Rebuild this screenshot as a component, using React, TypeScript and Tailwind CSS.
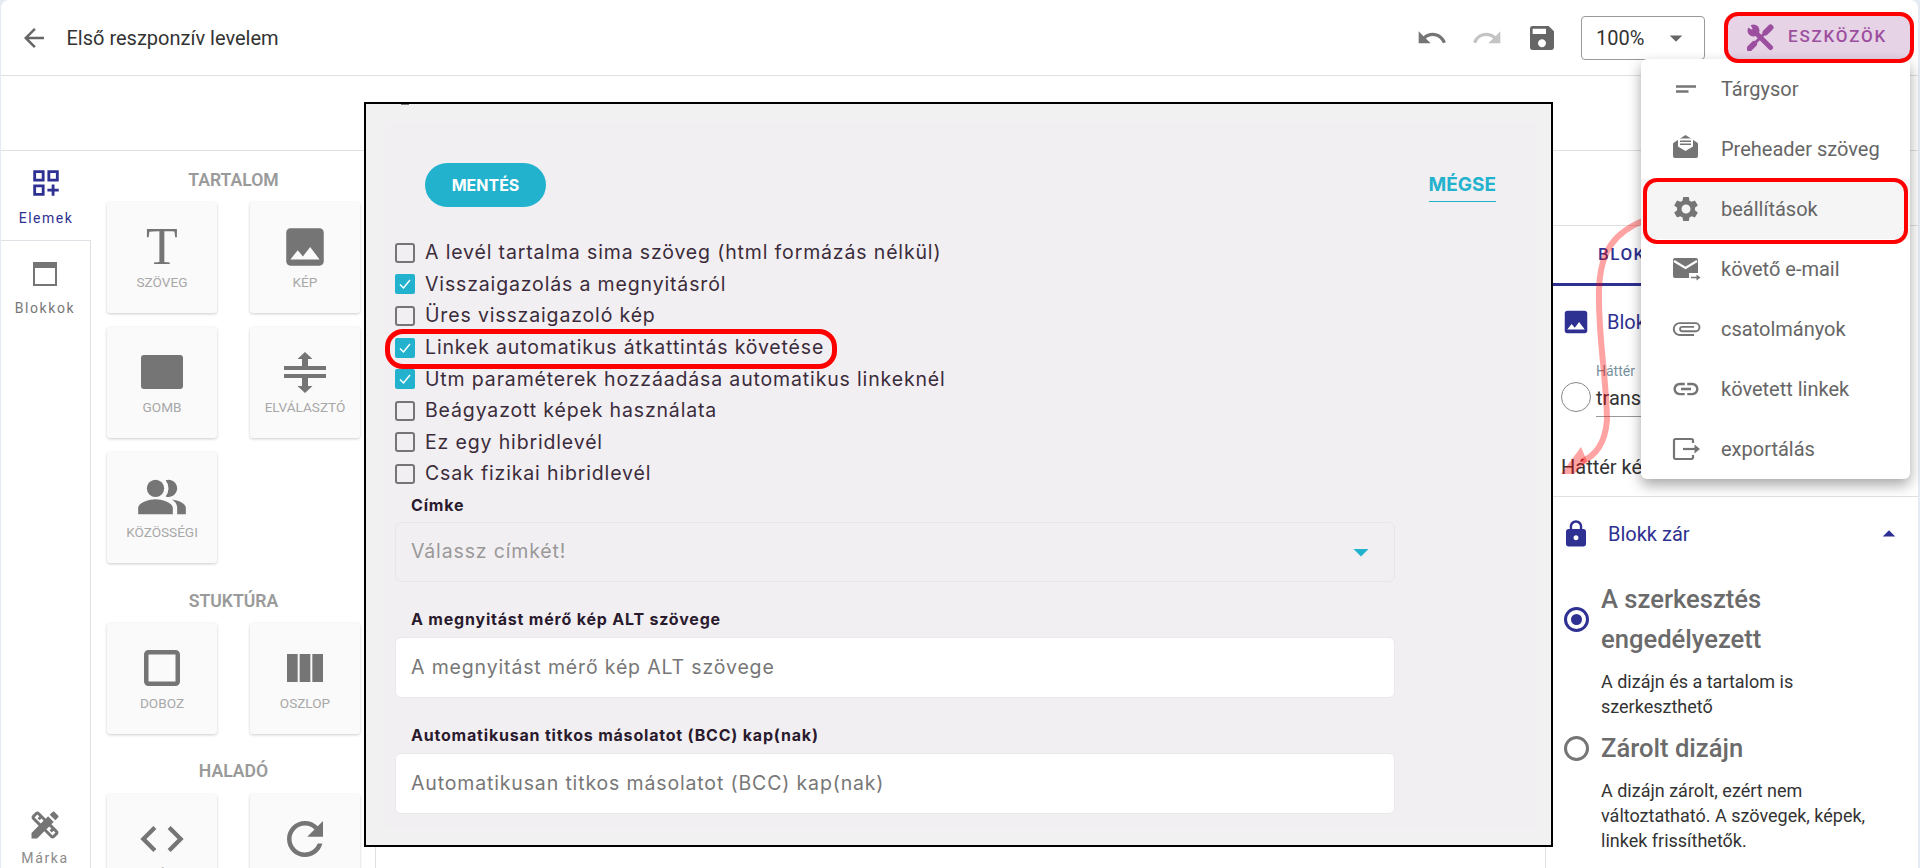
import React from "react";
import {
  MdArrowBack, MdUndo, MdRedo, MdSave, MdArrowDropDown, MdArrowDropUp, MdShortText, MdSettings,
  MdOutlineAttachment, MdLink, MdOutlineDashboardCustomize, MdDesignServices, MdImage,
  MdPeopleAlt, MdCropSquare, MdViewColumn, MdCode, MdRefresh, MdLock,
} from "react-icons/md";

const navy = "text-[#2e3191]";

function ToolsIcon() {
  return (
    <svg width="27" height="27" viewBox="0 0 27 27" fill="none" stroke="currentColor" className="shrink-0">
      <circle cx="6.500" cy="6.500" r="6" fill="currentColor" stroke="none" />
      <path d="M6.500 6.500 0 3V0h3z" fill="#e6d3e6" stroke="none" />
      <path d="M7 7 23.500 23.500" strokeWidth="5" strokeLinecap="round" />
      <path d="M23.500 3.500 18.500 8.500" strokeWidth="6" strokeLinecap="round" />
      <path d="M18.500 8.500 6 21" strokeWidth="3" />
      <path d="M7 20 2.500 24.500" strokeWidth="6" strokeLinecap="round" />
    </svg>
  );
}

function SeparatorIcon() {
  return (
    <svg width="42" height="41" viewBox="0 0 42 41" fill="#757575">
      <path d="M21 0 28.500 7H24v7h-6V7h-4.500zM0 14h42v4H0zM0 22h42v4H0zM18 26h6v8h4.500L21 41l-7.500-7H18z" />
    </svg>
  );
}

function PreheaderIcon() {
  return (
    <svg width="30" height="30" viewBox="0 0 30 30">
      <path fill="#757575" d="M14.500 1 3 8.500A2 2 0 0 0 2 10.500V22a2 2 0 0 0 2 2h21a2 2 0 0 0 2-2V10.500a2 2 0 0 0-1-2z" />
      <path fill="#fff" d="M7 4.500h15v8L14.500 17 7 12.500z" />
      <path fill="#757575" d="M9 6.500h11V8H9zM9 9.500h11V11H9z" />
    </svg>
  );
}

function FollowIcon() {
  return (
    <svg width="30" height="30" viewBox="0 0 30 30">
      <path fill="#757575" d="M4 4h21a2 2 0 0 1 2 2v13h-9v5H4a2 2 0 0 1-2-2V6a2 2 0 0 1 2-2z" />
      <path fill="none" stroke="#fff" strokeWidth="2.200" d="M3 7l11.500 7L26 7" />
      <path fill="#757575" d="M20 22.800h5.500V20.500l4 3-4 3v-2.200H20z" />
    </svg>
  );
}

function ExportIcon() {
  return (
    <svg width="30" height="30" viewBox="0 0 30 30" fill="none" stroke="#757575" strokeWidth="2.200">
      <path d="M22 9V6.500A1.500 1.500 0 0 0 20.500 5H4.500A1.500 1.500 0 0 0 3 6.500v17A1.500 1.500 0 0 0 4.500 25h16a1.500 1.500 0 0 0 1.500-1.500V21" />
      <path d="M12 15h13" />
      <path d="M23.500 10.500 29 15l-5.500 4.500z" fill="#757575" stroke="none" />
    </svg>
  );
}

function BlockIcon() {
  return (
    <svg width="24" height="24" viewBox="0 0 24 24">
      <rect x="1" y="1" width="22" height="22" fill="#fff" stroke="#757575" strokeWidth="2" />
      <rect x="1" y="1" width="22" height="5" fill="#757575" />
    </svg>
  );
}

function Card({ label, children }: { label: string; children: React.ReactNode }) {
  return (
    <div className="h-[111px] w-[110px] rounded-[3px] bg-[#fafafa] shadow-[0_1px_3px_rgba(0,0,0,0.2)] pt-5 flex flex-col items-center">
      <div className="h-[50px] flex items-center justify-center text-[#757575]">{children}</div>
      <div className="h-5 flex items-center text-[13.6px] text-[#a8a8a8] uppercase whitespace-nowrap">{label}</div>
    </div>
  );
}

function Heading({ children, className = "" }: { children: React.ReactNode; className?: string }) {
  return <div className={`h-[22px] flex items-center justify-center text-[17.6px] font-semibold text-[#9a9a9a] ${className}`}>{children}</div>;
}

function Check({ checked, label }: { checked?: boolean; label: string }) {
  return (
    <div className="h-[31.6px] flex items-center">
      {checked ? (
        <div className="w-5 h-5 rounded-[2px] bg-[#23b2ce] flex items-center justify-center">
          <svg width="14" height="14" viewBox="0 0 14 14" fill="none" stroke="#fff" strokeWidth="1.500"><path d="m2 7.500 3.500 3.500L12 3" /></svg>
        </div>
      ) : (
        <div className="w-5 h-5 rounded-[3px] border-2 border-[#757575]" />
      )}
      <span className="ml-2.5 font-['Inter',sans-serif] text-[19.5px] tracking-[0.85px] text-[#3b2c3b] whitespace-nowrap">{label}</span>
    </div>
  );
}

function Field({ label, placeholder }: { label: string; placeholder: string }) {
  return (
    <div className="mt-[27px]">
      <div className="pl-4 h-[21px] flex items-center font-['Inter',sans-serif] text-[16px] tracking-[0.8px] font-bold text-[#2a1a2e]">{label}</div>
      <div className="mt-[7px] h-[61px] w-[1000px] rounded-md bg-white border border-[#ebe8eb] pl-[15px] flex items-center font-['Inter',sans-serif] text-[19.5px] tracking-[0.85px] text-[#777]">{placeholder}</div>
    </div>
  );
}

const menuItems: [React.ReactNode, string, boolean?][] = [
  [<MdShortText size={30} color="#757575" />, "Tárgysor"],
  [<PreheaderIcon />, "Preheader szöveg"],
  [<MdSettings size={30} color="#757575" />, "beállítások", true],
  [<FollowIcon />, "követő e-mail"],
  [<MdOutlineAttachment size={30} color="#757575" />, "csatolmányok"],
  [<MdLink size={30} color="#757575" />, "követett linkek"],
  [<ExportIcon />, "exportálás"],
];

export default function App() {
  return (
    <div className="relative w-[1920px] h-[868px] overflow-hidden bg-[#e4ebf2] font-['Roboto',sans-serif] pl-px pr-0.5">
      <div className="h-full bg-white rounded-t-lg flex flex-col">
        {/* Header */}
        <header className="h-[76px] shrink-0 border-b border-[#e0e0e0] flex items-center pl-[18px] pr-2">
          <MdArrowBack size={30} color="#666" />
          <span className="ml-[17.5px] text-[20px] text-[#333]">Első reszponzív levelem</span>
          <div className="ml-auto flex items-center gap-[23px]">
            <MdUndo size={32} color="#757575" />
            <MdRedo size={32} color="#c4c4c4" />
            <MdSave size={32} color="#666" />
          </div>
          <div className="ml-[23px] w-[124px] h-[44px] rounded border border-[#999] pl-[14px] flex items-center text-[20px] text-[#333]">
            100%
            <MdArrowDropDown size={30} color="#666" className="ml-[17px]" />
          </div>
          <div className="ml-[21px] w-[184px] h-[45px] rounded-[10px] bg-[#e6d3e6] border-b border-[#9c4f9f] flex items-center pl-[21px] text-[#9c4f9f]">
            <ToolsIcon />
            <span className="ml-[14px] text-[17px] font-medium tracking-[1.800px]">ESZKÖZÖK</span>
          </div>
        </header>
        <div className="h-[75px] shrink-0 border-b border-[#e0e0e0]" />

        {/* Main */}
        <div className="flex-1 min-h-0 flex overflow-hidden">
          {/* Tabs */}
          <aside className="w-[90px] shrink-0 flex flex-col">
            <div className="h-[90px] border-b border-[#dfe3e8] flex flex-col items-center pt-[15px]">
              <MdOutlineDashboardCustomize size={34} className={navy} />
              <span className={`mt-[8px] text-[14px] leading-5 tracking-[1.500px] ${navy}`}>Elemek</span>
            </div>
            <div className="flex-1 border-r border-[#e0e0e0] flex flex-col items-center pt-[21px] pr-px">
              <BlockIcon />
              <span className="mt-[12px] text-[14px] leading-5 tracking-[1.600px] text-[#777]">Blokkok</span>
              <div className="mt-auto flex flex-col items-center text-[#8a8a8a]">
                <MdDesignServices size={36} color="#757575" />
                <span className="mt-[5px] text-[14px] leading-5 tracking-[1.600px]">Márka</span>
              </div>
            </div>
          </aside>

          {/* Element panel */}
          <section className="w-[285px] shrink-0 border-r border-[#e0e0e0] pl-4 pt-[18px]">
            <div className="w-[253px]">
              <Heading className="mb-[11px]">TARTALOM</Heading>
              <div className="grid grid-cols-[110px_110px] gap-x-[33px] gap-y-[14px]">
                <Card label="Szöveg"><span className="font-['Liberation_Serif',serif] text-[52px] leading-none">T</span></Card>
                <Card label="Kép"><MdImage size={50} /></Card>
                <Card label="Gomb"><div className="w-[42px] h-[34px] rounded-[3px] bg-[#757575]" /></Card>
                <Card label="Elválasztó"><SeparatorIcon /></Card>
                <Card label="Közösségi"><MdPeopleAlt size={52} /></Card>
              </div>
              <Heading className="mt-[27px] mb-[11px]">STUKTÚRA</Heading>
              <div className="grid grid-cols-[110px_110px] gap-x-[33px]">
                <Card label="Doboz"><MdCropSquare size={54} /></Card>
                <Card label="Oszlop"><MdViewColumn size={48} /></Card>
              </div>
              <Heading className="mt-[26px] mb-[12px]">HALADÓ</Heading>
              <div className="grid grid-cols-[110px_110px] gap-x-[33px]">
                <Card label="Kód"><MdCode size={52} /></Card>
                <Card label="Ciklus"><MdRefresh size={54} /></Card>
              </div>
            </div>
          </section>

          {/* Canvas */}
          <main className="flex-1" />

          {/* Right panel */}
          <section className="w-[373px] shrink-0 border-l border-[#e0e0e0]">
            <div className="h-[75px] border-b border-[#e0e0e0]" />
            <div className="h-[60px] w-[170px] border-b-[3px] border-[#2e3191] pl-[52px] flex items-center">
              <span className={`text-[17px] font-medium tracking-[1.500px] ${navy}`}>BLOKK</span>
            </div>
            <div className={`h-[72px] flex items-center pl-[15px] ${navy}`}>
              <MdImage size={30} />
              <span className="ml-[16px] text-[20px] whitespace-nowrap">Blokk háttér</span>
            </div>
            <div className="mt-[5px] pl-[15px] flex">
              <div className="mt-[19px] w-[30px] h-[30px] rounded-full border border-[#888]" />
              <div className="ml-[5px] w-[180px]">
                <div className="h-4 flex items-center text-[14px] text-[#78909c]">Háttér</div>
                <div className="h-[38px] border-b border-[#999] flex items-center text-[20px] text-[#333]">transparent</div>
              </div>
            </div>
            <div className="border-b border-[#e0e0e0] pb-[15px] mt-[35px] pl-[15px] h-[45px] text-[20px] leading-[30px] text-[#333]">Háttér kép</div>
            <div className={`h-[73px] flex items-center pl-[16px] ${navy}`}>
              <MdLock size={30} className="-ml-[1px]" />
              <span className="ml-[17px] text-[20px]">Blokk zár</span>
              <MdArrowDropUp size={30} className="ml-auto mr-[14px]" />
            </div>
            <div className="mt-[9px] pl-[18px] flex items-center">
              <div className="w-[25px] h-[25px] rounded-full border-[3px] border-[#2e3191] flex items-center justify-center">
                <div className="w-[11px] h-[11px] rounded-full bg-[#2e3191]" />
              </div>
              <div className="ml-[12px] w-[280px] text-[25.6px] leading-[40px] font-medium text-[#6b6b6b]">A szerkesztés engedélyezett</div>
            </div>
            <div className="mt-[10px] ml-[55px] w-[280px] text-[18px] leading-[25px] text-[#333]">A dizájn és a tartalom is szerkeszthető</div>
            <div className="mt-[9px] pl-[18px] flex items-center">
              <div className="w-[25px] h-[25px] rounded-full border-[3px] border-[#757575]" />
              <div className="ml-[12px] text-[25.6px] leading-[40px] font-medium text-[#6b6b6b]">Zárolt dizájn</div>
            </div>
            <div className="mt-[10px] ml-[55px] w-[280px] text-[18px] leading-[25px] text-[#333]">A dizájn zárolt, ezért nem változtatható. A szövegek, képek, linkek frissíthetők.</div>
          </section>
        </div>
      </div>

      {/* Annotated settings dialog, pasted over the editor */}
      <div className="absolute left-[364px] top-[102px] w-[1189px] h-[745px] border-2 border-black bg-[#f1f1f1] pt-[19px] pl-[19px] pr-[15px] pb-[17px]">
        <div className="absolute left-[35px] top-0 w-2 h-px bg-[#777]" />
        <div className="h-full bg-[#f2eff2]">
          <div className="flex items-center justify-between pt-10 pl-10 pr-10">
            <div className="w-[121px] h-[44px] rounded-full bg-[#23b2ce] flex items-center justify-center font-['Inter',sans-serif] text-[16px] font-bold text-white">MENTÉS</div>
            <div className="h-[33px] border-b border-[#23b2ce] font-['Inter',sans-serif] text-[19px] font-bold text-[#23b2ce] leading-[32px]">MÉGSE</div>
          </div>
          <div className="mt-[30px] pl-2.5">
            <Check label="A levél tartalma sima szöveg (html formázás nélkül)" />
            <Check checked label="Visszaigazolás a megnyitásról" />
            <Check label="Üres visszaigazoló kép" />
            <Check checked label="Linkek automatikus átkattintás követése" />
            <Check checked label="Utm paraméterek hozzáadása automatikus linkeknél" />
            <Check label="Beágyazott képek használata" />
            <Check label="Ez egy hibridlevél" />
            <Check label="Csak fizikai hibridlevél" />
            <div className="mt-[5px]">
              <div className="pl-4 h-[21px] flex items-center font-['Inter',sans-serif] text-[16px] tracking-[0.8px] font-bold text-[#2a1a2e]">Címke</div>
              <div className="mt-[6px] h-[60px] w-[1000px] rounded-md border border-[#e8e5e8] pl-[15px] pr-[15px] flex items-center justify-between font-['Inter',sans-serif] text-[19.5px] tracking-[0.85px] text-[#999]">
                Válassz címkét!
                <MdArrowDropDown size={36} color="#23b2ce" />
              </div>
            </div>
            <Field label="A megnyitást mérő kép ALT szövege" placeholder="A megnyitást mérő kép ALT szövege" />
            <Field label="Automatikusan titkos másolatot (BCC) kap(nak)" placeholder="Automatikusan titkos másolatot (BCC) kap(nak)" />
          </div>
        </div>
      </div>

      {/* Hand-drawn arrow */}
      <svg className="absolute left-0 top-0 pointer-events-none" width="1920" height="868">
        <path d="M1645 220C1615 232 1600 250 1599 290C1598 340 1606 370 1607 420C1605 445 1595 455 1582 462" fill="none" stroke="rgba(255,0,0,0.36)" strokeWidth="6" />
        <path d="M1561 474 1581 447 1587 461 1574 474z" fill="rgba(255,0,0,0.36)" />
      </svg>

      {/* Tools menu */}
      <div className="absolute left-[1641px] top-[59px] w-[269px] h-[420px] rounded-md bg-white shadow-[0_6px_14px_rgba(0,0,0,0.35)]">
        {menuItems.map(([icon, text, active]) => (
          <div key={text} className={`h-[60px] flex items-center pl-[30px] text-[20px] text-[#666] ${active ? "bg-[#f5f5f5]" : ""}`}>
            <div className="w-[30px] h-[30px]">{icon}</div>
            <span className="ml-[20px]">{text}</span>
          </div>
        ))}
      </div>

      {/* Red annotation rings */}
      <div className="absolute left-[1724px] top-[12px] w-[190px] h-[51px] border-4 border-[#ff0000] rounded-[14px]" />
      <div className="absolute left-[1643px] top-[178px] w-[265px] h-[66px] border-[4px] border-[#ff0000] rounded-[14px]" />
      <div className="absolute left-[385px] top-[329px] w-[452px] h-[40px] border-[5px] border-[#ff0000] rounded-[18px]" />
    </div>
  );
}
